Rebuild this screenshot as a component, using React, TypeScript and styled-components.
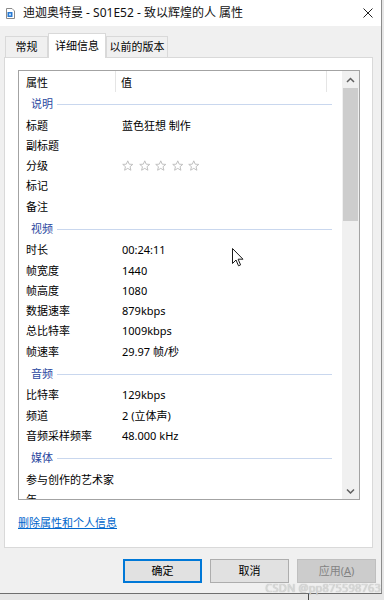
import React from "react";
import styled, { createGlobalStyle } from "styled-components";

type Item =
  | { kind: "group"; label: string }
  | { kind: "row"; name: string; value?: string; stars?: boolean };

const items: Item[] = [
  { kind: "group", label: "说明" },
  { kind: "row", name: "标题", value: "蓝色狂想 制作" },
  { kind: "row", name: "副标题" },
  { kind: "row", name: "分级", stars: true },
  { kind: "row", name: "标记" },
  { kind: "row", name: "备注" },
  { kind: "group", label: "视频" },
  { kind: "row", name: "时长", value: "00:24:11" },
  { kind: "row", name: "帧宽度", value: "1440" },
  { kind: "row", name: "帧高度", value: "1080" },
  { kind: "row", name: "数据速率", value: "879kbps" },
  { kind: "row", name: "总比特率", value: "1009kbps" },
  { kind: "row", name: "帧速率", value: "29.97 帧/秒" },
  { kind: "group", label: "音频" },
  { kind: "row", name: "比特率", value: "129kbps" },
  { kind: "row", name: "频道", value: "2 (立体声)" },
  { kind: "row", name: "音频采样频率", value: "48.000 kHz" },
  { kind: "group", label: "媒体" },
  { kind: "row", name: "参与创作的艺术家" },
  { kind: "row", name: "年" },
];

const GlobalStyle = createGlobalStyle`
  html, body {
    margin: 0;
    padding: 0;
  }
  body {
    background: #e6e6e6;
    font-family: "Noto Sans", "Noto Sans CJK SC", sans-serif;
    font-size: 11px;
    color: #000;
  }
`;

const Screen = styled.div`
  position: relative;
  width: 384px;
  height: 600px;
  overflow: hidden;
  background: #e6e6e6;
`;

const Window = styled.div`
  width: 381px;
  height: 593px;
  background: #f0f0f0;
  border-right: 1px solid #8c8c8c;
  border-bottom: 1px solid #6e6e6e;
  display: flex;
  flex-direction: column;
`;

const TitleBar = styled.div`
  height: 26px;
  background: #fff;
  display: flex;
  align-items: center;
  padding-left: 6px;
`;

const TitleText = styled.span`
  margin-left: 8px;
  font-size: 12px;
  line-height: 14px;
  color: #111;
`;

const CloseIcon = styled.svg`
  margin-left: auto;
  margin-right: 8px;
`;

const TabStrip = styled.div`
  display: flex;
  align-items: flex-end;
  margin-top: 7px;
  padding-left: 5px;
  height: 24px;
`;

const Tab = styled.div<{ $w: number; $active?: boolean }>`
  box-sizing: border-box;
  width: ${(p) => p.$w}px;
  height: ${(p) => (p.$active ? 25 : 21)}px;
  margin-bottom: ${(p) => (p.$active ? -1 : 0)}px;
  position: relative;
  z-index: ${(p) => (p.$active ? 1 : 0)};
  background: ${(p) => (p.$active ? "#fff" : "#f0f0f0")};
  border: 1px solid #d9d9d9;
  border-bottom: none;
  display: flex;
  align-items: center;
  justify-content: center;
  line-height: 14px;
  padding-bottom: ${(p) => (p.$active ? 1 : 0)}px;
`;

const Panel = styled.div`
  box-sizing: border-box;
  margin: 0 8px 0 4px;
  height: 491px;
  background: #fff;
  border: 1px solid #d9d9d9;
  padding: 12px 0 0 13px;
  display: flex;
  flex-direction: column;
`;

const ListBox = styled.div`
  box-sizing: border-box;
  width: 342px;
  height: 430px;
  border: 1px solid #a3a3a3;
  display: flex;
  overflow: hidden;
`;

const ListContent = styled.div`
  flex: 1;
  overflow: hidden;
`;

const HeaderRow = styled.div`
  display: flex;
  height: 21px;
`;

const HeaderCell = styled.div<{ $w: number; $pad: number }>`
  box-sizing: border-box;
  width: ${(p) => p.$w}px;
  border-right: 1px solid #e5e5e5;
  padding-left: ${(p) => p.$pad}px;
  padding-top: 5px;
  line-height: 14px;
`;

const GroupRow = styled.div`
  height: 23.5px;
  display: flex;
  align-items: center;
  padding-left: 12px;
  color: #2b47a0;
  line-height: 14px;
`;

const GroupLine = styled.div`
  flex: 1;
  height: 1px;
  background: #c9d7ee;
  margin: 1px 10px 0 4px;
`;

const DataRow = styled.div`
  height: 20.25px;
  display: grid;
  grid-template-columns: 97px 1fr;
  align-items: center;
  line-height: 14px;
  white-space: nowrap;
`;

const NameCell = styled.div`
  padding-left: 7px;
`;

const ValueCell = styled.div`
  padding-left: 6px;
  display: flex;
  gap: 5px;
`;

const ScrollBar = styled.div`
  width: 17px;
  background: #f0f0f0;
  display: flex;
  flex-direction: column;
`;

const ScrollArrow = styled.div`
  height: 17px;
  display: flex;
  align-items: center;
  justify-content: center;
`;

const ScrollThumb = styled.div`
  height: 133px;
  margin: 0 1px;
  background: #cdcdcd;
`;

const ScrollTrack = styled.div`
  flex: 1;
`;

const PrivacyLink = styled.a`
  margin-top: 16px;
  align-self: flex-start;
  color: #0066cc;
  text-decoration: underline;
  line-height: 14px;
  cursor: pointer;
`;

const ButtonRow = styled.div`
  display: flex;
  justify-content: flex-end;
  gap: 8px;
  margin-top: 11px;
  padding-right: 5px;
`;

const Button = styled.button<{ $variant?: "primary" | "disabled" }>`
  box-sizing: border-box;
  width: 79px;
  height: 24px;
  font-family: inherit;
  font-size: 11px;
  line-height: 14px;
  padding: 0;
  background: ${(p) => (p.$variant === "disabled" ? "#cccccc" : "#e1e1e1")};
  color: ${(p) => (p.$variant === "disabled" ? "#838383" : "#000")};
  border: ${(p) =>
    p.$variant === "primary"
      ? "2px solid #0078d7"
      : p.$variant === "disabled"
      ? "1px solid #bfbfbf"
      : "1px solid #adadad"};
`;

const DesktopStrip = styled.div`
  display: flex;
  height: 6px;
`;

const DesktopSeam = styled.div`
  margin-left: 308px;
  width: 1px;
  background: #4a4a4a;
`;

const Watermark = styled.div`
  position: absolute;
  right: 3px;
  bottom: 5px;
  font-size: 11px;
  line-height: 14px;
  color: #dadada;
  text-shadow: 0 0 1px #a8a8a8;
  letter-spacing: 0.2px;
`;

const Cursor = styled.svg`
  position: absolute;
  left: 232px;
  top: 248px;
`;

const FileIcon = () => (
  <svg width="9" height="11" viewBox="0 0 9 11">
    <path d="M0.5 0.5 H6 L8.5 3 V10.5 H0.5 Z" fill="#fff" stroke="#8a8a8a" />
    <rect x="1.5" y="4" width="5" height="5" fill="#2a7ad2" />
    <rect x="3" y="5.5" width="2" height="2" fill="#bfe0ff" />
  </svg>
);

const Star = () => (
  <svg width="11.5" height="11.5" viewBox="0 0 11 11">
    <path
      d="M5.5 0.8 L6.9 4 L10.3 4.2 L7.7 6.4 L8.5 9.8 L5.5 8 L2.5 9.8 L3.3 6.4 L0.7 4.2 L4.1 4 Z"
      fill="none"
      stroke="#bdbdbd"
      strokeWidth="0.9"
      strokeLinejoin="round"
    />
  </svg>
);

const Chevron = ({ down }: { down?: boolean }) => (
  <svg width="9" height="6" viewBox="0 0 9 6">
    <polyline
      points={down ? "1,1.5 4.5,5 8,1.5" : "1,5 4.5,1.5 8,5"}
      fill="none"
      stroke="#606060"
      strokeWidth="1.5"
    />
  </svg>
);

const App: React.FC = () => {
  return (
    <Screen>
      <GlobalStyle />
      <Window>
        <TitleBar>
          <FileIcon />
          <TitleText>迪迦奥特曼 - S01E52 - 致以辉煌的人 属性</TitleText>
          <CloseIcon width="10" height="10" viewBox="0 0 10 10">
            <path d="M0.5 0.5 L9.5 9.5 M9.5 0.5 L0.5 9.5" stroke="#222" strokeWidth="1" />
          </CloseIcon>
        </TitleBar>
        <TabStrip>
          <Tab $w={43}>常规</Tab>
          <Tab $w={58} $active>
            详细信息
          </Tab>
          <Tab $w={62}>以前的版本</Tab>
        </TabStrip>
        <Panel>
          <ListBox>
            <ListContent>
              <HeaderRow>
                <HeaderCell $w={97} $pad={7}>
                  属性
                </HeaderCell>
                <HeaderCell $w={211} $pad={5}>
                  值
                </HeaderCell>
              </HeaderRow>
              {items.map((item, i) =>
                item.kind === "group" ? (
                  <GroupRow key={i}>
                    {item.label}
                    <GroupLine />
                  </GroupRow>
                ) : (
                  <DataRow key={i}>
                    <NameCell>{item.name}</NameCell>
                    <ValueCell>
                      {item.stars
                        ? [0, 1, 2, 3, 4].map((s) => <Star key={s} />)
                        : item.value}
                    </ValueCell>
                  </DataRow>
                )
              )}
            </ListContent>
            <ScrollBar>
              <ScrollArrow>
                <Chevron />
              </ScrollArrow>
              <ScrollThumb />
              <ScrollTrack />
              <ScrollArrow>
                <Chevron down />
              </ScrollArrow>
            </ScrollBar>
          </ListBox>
          <PrivacyLink>删除属性和个人信息</PrivacyLink>
        </Panel>
        <ButtonRow>
          <Button $variant="primary">确定</Button>
          <Button>取消</Button>
          <Button $variant="disabled">
            应用(<u>A</u>)
          </Button>
        </ButtonRow>
      </Window>
      <DesktopStrip>
        <DesktopSeam />
      </DesktopStrip>
      <Watermark>CSDN @pp875598763</Watermark>
      <Cursor width="12" height="19" viewBox="0 0 12 19">
        <path
          d="M0.5 0.5 L0.5 15.5 L4 12 L6.5 17.8 L8.6 16.9 L6.1 11.2 L11 11.2 Z"
          fill="#fff"
          stroke="#1a1a1a"
          strokeWidth="1"
          strokeLinejoin="round"
        />
      </Cursor>
    </Screen>
  );
};

export default App;
